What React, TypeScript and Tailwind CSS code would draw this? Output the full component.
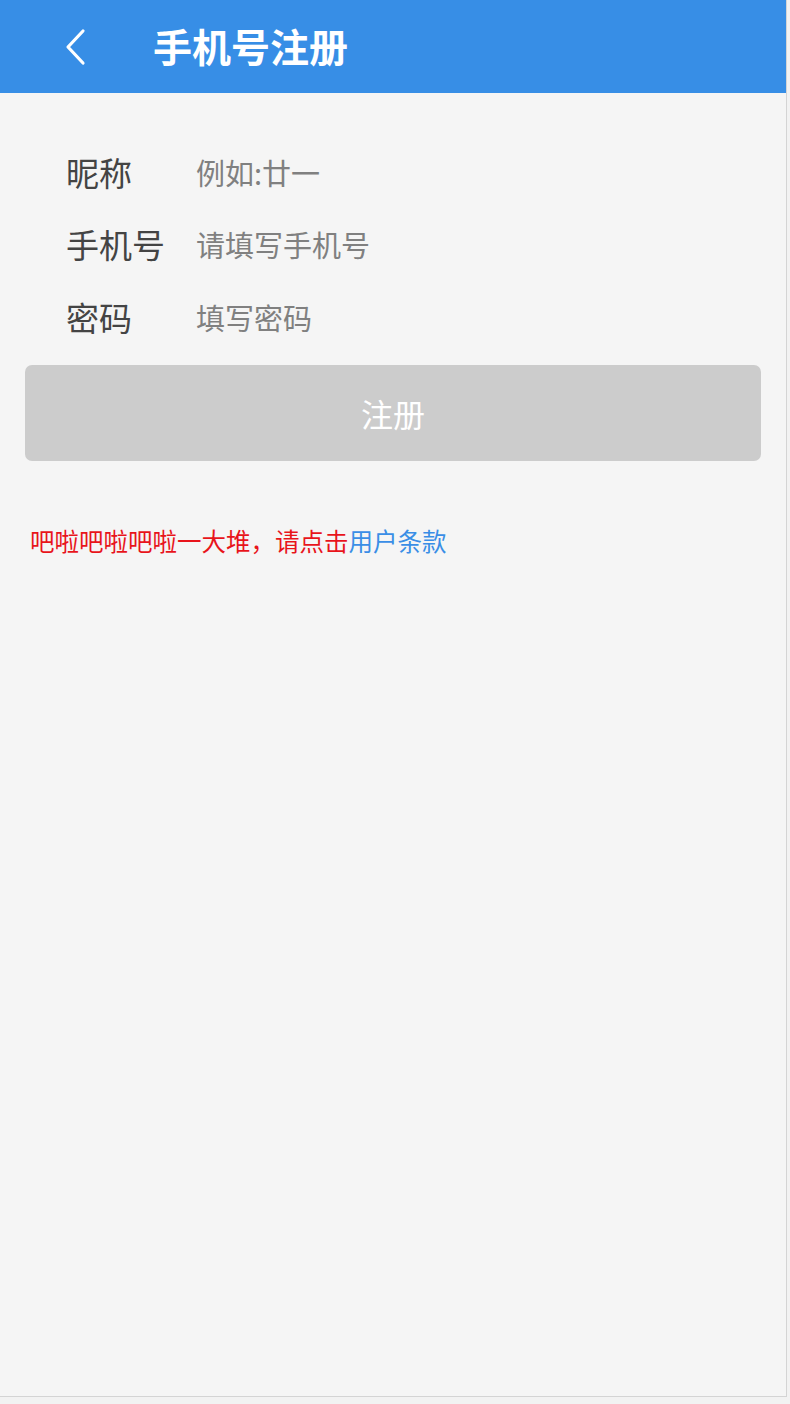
const FIELDS = [
  { label: "昵称", placeholder: "例如:廿一", type: "text" },
  { label: "手机号", placeholder: "请填写手机号", type: "tel" },
  { label: "密码", placeholder: "填写密码", type: "password" },
];

export default function App() {
  return (
    <div
      className="min-h-[1404px] w-[790px] bg-[#f2f2f2]"
      style={{ fontFamily: '"Noto Sans CJK SC", "Noto Sans", sans-serif' }}
    >
      <div className="flex h-[1397px] w-[787px] flex-col border-r border-b border-[#d4d4d4] bg-[#f5f5f5]">
        {/* Header */}
        <header className="flex h-[93px] items-center bg-[#378ee6] text-white">
          <button type="button" className="ml-[60px] flex h-12 w-[30px] items-center justify-center">
            <svg width="28" height="40" viewBox="0 0 28 40" fill="none" stroke="currentColor" strokeWidth="3.2" strokeLinecap="round" strokeLinejoin="round">
              <path d="M22 4 L7 20 L22 36" />
            </svg>
          </button>
          <h1 className="ml-[63px] -mt-[2px] text-[39px] font-bold leading-none">手机号注册</h1>
        </header>

        {/* Form */}
        <div className="mt-[43px] flex flex-col pl-[66px]">
          {FIELDS.map((f) => (
            <label key={f.label} className="flex h-[72.5px] items-center">
              <span className="w-[130px] text-[33px] leading-none text-[#444]">{f.label}</span>
              <input
                type={f.type}
                placeholder={f.placeholder}
                className="flex-1 bg-transparent text-[29px] text-[#333] outline-none placeholder:text-[#808080]"
              />
            </label>
          ))}
        </div>

        <div className="px-[25px]">
          <button
            type="button"
            className="mt-[11px] flex h-[96px] w-full items-center justify-center rounded-[7px] bg-[#cccccc] text-[32px] text-white"
          >
            注册
          </button>
        </div>

        <p className="mt-[68px] pl-[30px] text-[24.5px] leading-none text-[#e8141b]">
          吧啦吧啦吧啦一大堆，请点击<span className="text-[#3a8ee6]">用户条款</span>
        </p>
      </div>
    </div>
  );
}
